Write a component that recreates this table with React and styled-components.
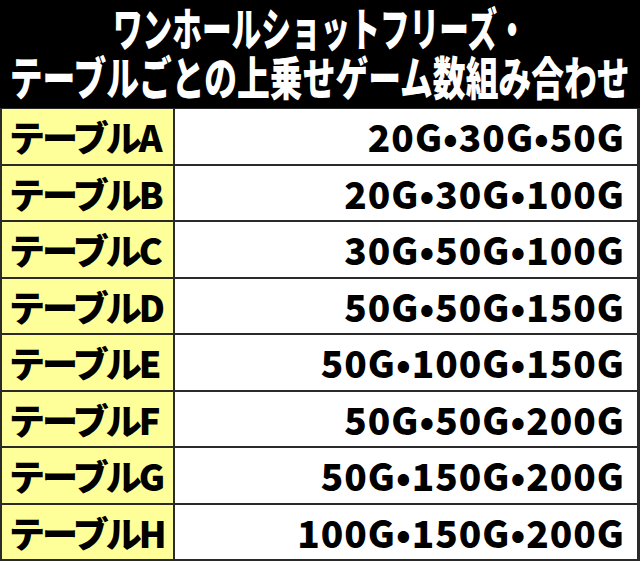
import React from "react";
import styled, { createGlobalStyle } from "styled-components";

const Global = createGlobalStyle`
  html, body { margin: 0; padding: 0; background: #000; }
  body { font-family: "Noto Sans CJK JP", "Noto Sans", sans-serif; }
`;

const Page = styled.div`
  width: 640px;
  height: 561px;
  background: #000;
  display: flex;
  flex-direction: column;
  overflow: hidden;
`;

const Header = styled.header`
  height: 108px;
  flex: none;
  display: flex;
  flex-direction: column;
  align-items: center;
  justify-content: flex-start;
  color: #fff;
  font-weight: 900;
  font-size: 46px;
  line-height: 49px;
  padding-top: 2px;
  box-sizing: border-box;
`;

const HeadLine = styled.span`
  display: block;
  white-space: nowrap;
  transform: scaleX(${(p) => p.$sx});
  transform-origin: center;
`;

const Table = styled.div`
  flex: 1;
  display: grid;
  grid-template-columns: 171px 1fr;
  grid-template-rows: repeat(8, 1fr);
  gap: 2px;
  background: #2a2a2a;
  padding: 1px 3px 2px 2px;
  box-sizing: border-box;
`;

const Label = styled.div`
  background: #ffff99;
  display: flex;
  align-items: center;
  padding-left: 7px;
  color: #000;
  font-weight: 900;
  font-size: 36px;
  letter-spacing: -3px;
  white-space: nowrap;
`;

const Value = styled.div`
  background: #fff;
  display: flex;
  align-items: center;
  justify-content: flex-end;
  padding-right: 12px;
  color: #000;
  font-weight: 900;
  font-size: 37px;
  letter-spacing: 1px;
  white-space: nowrap;
`;

const rows = [
  ["A", "20G•30G•50G"],
  ["B", "20G•30G•100G"],
  ["C", "30G•50G•100G"],
  ["D", "50G•50G•150G"],
  ["E", "50G•100G•150G"],
  ["F", "50G•50G•200G"],
  ["G", "50G•150G•200G"],
  ["H", "100G•150G•200G"],
];

export default function App() {
  return (
    <Page>
      <Global />
      <Header>
        <HeadLine $sx={0.645}>ワンホールショットフリーズ・</HeadLine>
        <HeadLine $sx={0.713}>テーブルごとの上乗せゲーム数組み合わせ</HeadLine>
      </Header>
      <Table>
        {rows.map(([k, v]) => (
          <React.Fragment key={k}>
            <Label>テーブル{k}</Label>
            <Value>{v}</Value>
          </React.Fragment>
        ))}
      </Table>
    </Page>
  );
}
